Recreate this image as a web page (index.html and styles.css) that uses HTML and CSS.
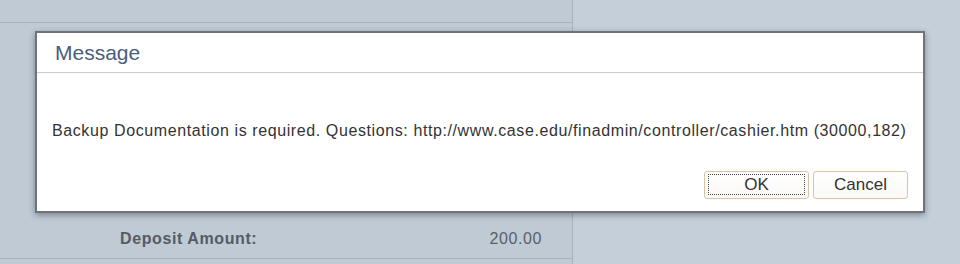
FILE: index.html
```html
<!DOCTYPE html>
<html>
<head>
<meta charset="utf-8">
<link rel="stylesheet" href="styles.css">
</head>
<body>
<div class="page">
  <div class="panel">
    <div class="panel-top"></div>
    <div class="panel-mid"></div>
    <div class="deposit-row">
      <span class="deposit-label">Deposit Amount:</span>
      <span class="deposit-value">200.00</span>
    </div>
  </div>
  <div class="side"></div>
</div>
<div class="dialog">
  <div class="dialog-title">Message</div>
  <div class="dialog-body">Backup Documentation is required. Questions: http://www.case.edu/finadmin/controller/cashier.htm (30000,182)</div>
  <div class="dialog-buttons">
    <button class="btn btn-ok"><span class="focus">OK</span></button>
    <button class="btn btn-cancel">Cancel</button>
  </div>
</div>
</body>
</html>
```
FILE: styles.css
```css
html, body {
  margin: 0;
  padding: 0;
}
body {
  width: 960px;
  height: 264px;
  overflow: hidden;
  background: #c5cfd9;
  font-family: "Liberation Sans", Arial, sans-serif;
  position: relative;
}
.page {
  display: flex;
  height: 264px;
}
.panel {
  width: 572px;
  background: #bfcad5;
  border-right: 1px solid #a8b2bd;
  display: flex;
  flex-direction: column;
}
.panel-top {
  height: 22px;
  border-bottom: 1px solid #a9b3be;
}
.panel-mid {
  height: 196px;
}
.deposit-row {
  height: 39px;
  border-bottom: 1px solid #a9b3be;
  display: flex;
  align-items: center;
  justify-content: space-between;
  padding: 0 30px 0 120px;
  font-size: 16px;
  letter-spacing: 0.6px;
  color: #555b64;
}
.deposit-label {
  font-weight: bold;
}
.deposit-value {
  color: #5a6068;
}
.side {
  flex: 1;
}
.dialog {
  position: absolute;
  left: 35px;
  top: 31px;
  width: 886px;
  height: 178px;
  background: #fff;
  border: 2px solid #6f7276;
  box-shadow: 0 2px 6px rgba(40, 45, 55, 0.45);
  display: flex;
  flex-direction: column;
}
.dialog-title {
  height: 39px;
  border-bottom: 1px solid #cbcbcb;
  padding-left: 18px;
  font-size: 21px;
  line-height: 40px;
  color: #4a5d7c;
}
.dialog-body {
  padding: 49px 0 0 15px;
  font-size: 16px;
  letter-spacing: 0.6px;
  line-height: 18px;
  color: #333;
  height: 20px;
  white-space: nowrap;
}
.dialog-buttons {
  display: flex;
  justify-content: flex-end;
  gap: 4px;
  padding-right: 15px;
  margin-top: 29px;
}
.btn {
  height: 28px;
  border: 1px solid #ddc2a6;
  border-radius: 3px;
  background: linear-gradient(#ffffff, #fbf9f7);
  font-family: "Liberation Sans", Arial, sans-serif;
  font-size: 17px;
  color: #333;
  padding: 0;
  box-sizing: border-box;
}
.btn-ok {
  width: 105px;
  display: flex;
  align-items: stretch;
  padding: 2px 3px 3px 3px;
}
.focus {
  flex: 1;
  border: 1px dotted #444;
  display: flex;
  align-items: center;
  justify-content: center;
}
.btn-cancel {
  width: 95px;
}
```
